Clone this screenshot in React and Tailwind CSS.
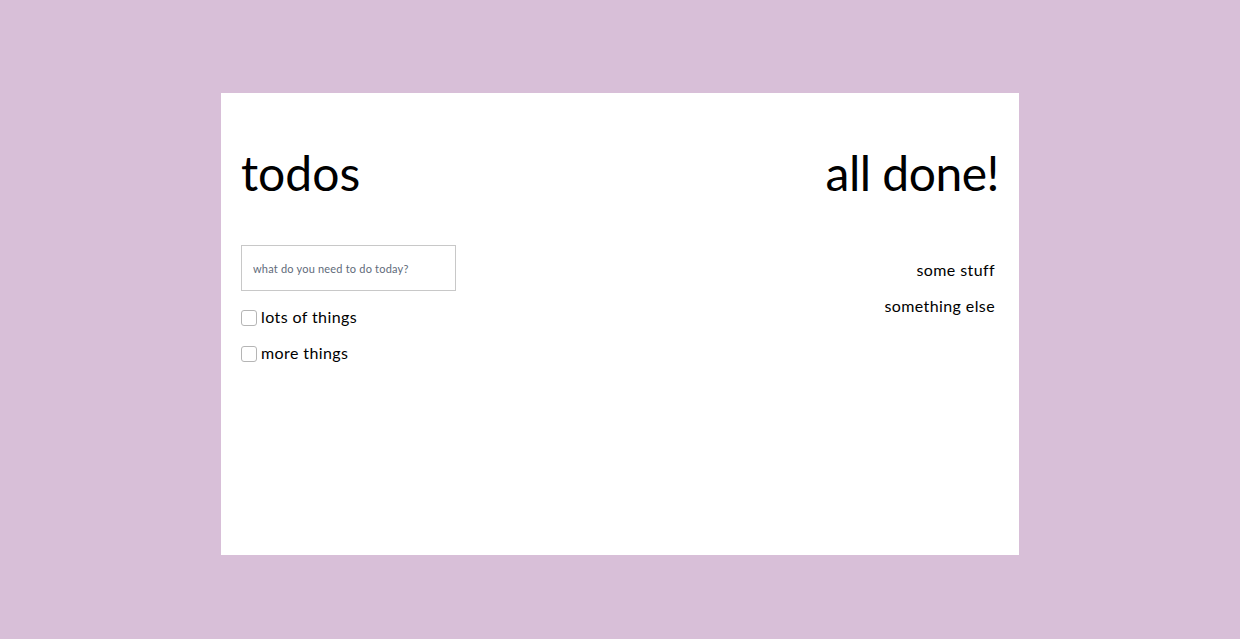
import React, { useState } from "react";

export default function App() {
  const [todos, setTodos] = useState([
    { text: "lots of things", done: false },
    { text: "more things", done: false }
  ]);
  const done = ["some stuff", "something else"];

  return (
    <div className="min-h-[639px] bg-[#d8bfd8] pt-[93px] font-['Lato',sans-serif] text-black">
      <div className="mx-auto flex h-[462px] w-[798px] justify-between bg-white px-5">
        <div className="flex flex-col">
          <h1 className="mt-[56px] text-[48px] leading-[48px]">todos</h1>
          <input
            type="text"
            placeholder="what do you need to do today?"
            className="mt-[48px] h-[46px] w-[215px] border border-[#c8c8c8] px-[11px] text-[11px] tracking-[0.2px] placeholder:text-[#5f6b7a] outline-none"
          />
          <ul className="mt-[19px] flex flex-col gap-5">
            {todos.map((todo, i) => (
              <li key={i} className="flex h-4 items-center gap-1 text-[16px] tracking-[0.4px]">
                <input
                  type="checkbox"
                  checked={todo.done}
                  onChange={() =>
                    setTodos(todos.map((t, j) => (j === i ? { ...t, done: !t.done } : t)))
                  }
                  className="h-4 w-4 appearance-none rounded-[3px] border border-[#b5b5b5] bg-white"
                />
                <span className="-mt-0.5">{todo.text}</span>
              </li>
            ))}
          </ul>
        </div>
        <div className="flex flex-col items-end">
          <h1 className="mt-[56px] text-[48px] leading-[48px] tracking-[-0.5px]">all done!</h1>
          <ul className="mt-[65px] flex flex-col items-end gap-5 pr-1">
            {done.map((item) => (
              <li key={item} className="h-4 text-[16px] leading-4 tracking-[0.4px]">
                {item}
              </li>
            ))}
          </ul>
        </div>
      </div>
    </div>
  );
}
